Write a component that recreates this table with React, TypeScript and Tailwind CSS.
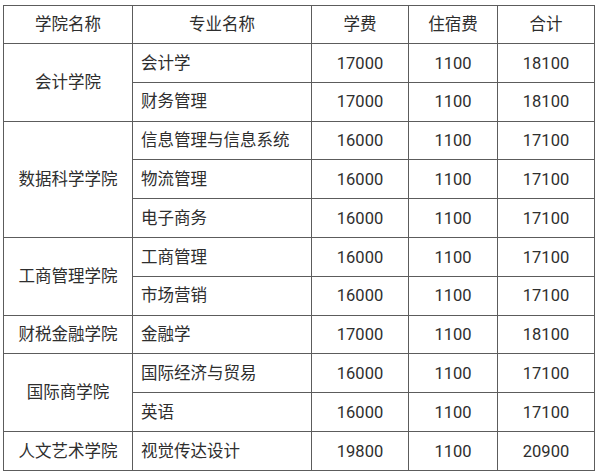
type Row = { major: string; fee: string; stay: string; total: string };
type Group = { college: string; rows: Row[] };

const groups: Group[] = [
  {
    college: "会计学院",
    rows: [
      { major: "会计学", fee: "17000", stay: "1100", total: "18100" },
      { major: "财务管理", fee: "17000", stay: "1100", total: "18100" },
    ],
  },
  {
    college: "数据科学学院",
    rows: [
      { major: "信息管理与信息系统", fee: "16000", stay: "1100", total: "17100" },
      { major: "物流管理", fee: "16000", stay: "1100", total: "17100" },
      { major: "电子商务", fee: "16000", stay: "1100", total: "17100" },
    ],
  },
  {
    college: "工商管理学院",
    rows: [
      { major: "工商管理", fee: "16000", stay: "1100", total: "17100" },
      { major: "市场营销", fee: "16000", stay: "1100", total: "17100" },
    ],
  },
  {
    college: "财税金融学院",
    rows: [{ major: "金融学", fee: "17000", stay: "1100", total: "18100" }],
  },
  {
    college: "国际商学院",
    rows: [
      { major: "国际经济与贸易", fee: "16000", stay: "1100", total: "17100" },
      { major: "英语", fee: "16000", stay: "1100", total: "17100" },
    ],
  },
  {
    college: "人文艺术学院",
    rows: [{ major: "视觉传达设计", fee: "19800", stay: "1100", total: "20900" }],
  },
];

const cell = "border border-[#5c5c5c] p-0 pt-[2px]";

export default function App() {
  return (
    <div
      className="w-[600px] h-[476px] bg-white pt-[5px] pl-[3px] text-[#2e2e2e] text-[16.5px] leading-none"
      style={{ fontFamily: 'Roboto, "Noto Sans CJK SC", sans-serif' }}
    >
      <table className="table-fixed border-collapse w-[591px]">
        <colgroup>
          <col className="w-[129px]" />
          <col className="w-[179px]" />
          <col className="w-[97px]" />
          <col className="w-[89px]" />
          <col className="w-[97px]" />
        </colgroup>
        <thead>
          <tr className="h-[38px]">
            <th className={`${cell} font-normal text-center`}>学院名称</th>
            <th className={`${cell} font-normal text-center`}>专业名称</th>
            <th className={`${cell} font-normal text-center`}>学费</th>
            <th className={`${cell} font-normal text-center`}>住宿费</th>
            <th className={`${cell} font-normal text-center`}>合计</th>
          </tr>
        </thead>
        <tbody>
          {groups.map((g) =>
            g.rows.map((r, i) => (
              <tr key={g.college + r.major} className="h-[38.8px]">
                {i === 0 && (
                  <td rowSpan={g.rows.length} className={`${cell} text-center`}>
                    {g.college}
                  </td>
                )}
                <td className={`${cell} pl-[8px] text-left`}>{r.major}</td>
                <td className={`${cell} text-center`}>{r.fee}</td>
                <td className={`${cell} text-center`}>{r.stay}</td>
                <td className={`${cell} text-center`}>{r.total}</td>
              </tr>
            ))
          )}
        </tbody>
      </table>
    </div>
  );
}
